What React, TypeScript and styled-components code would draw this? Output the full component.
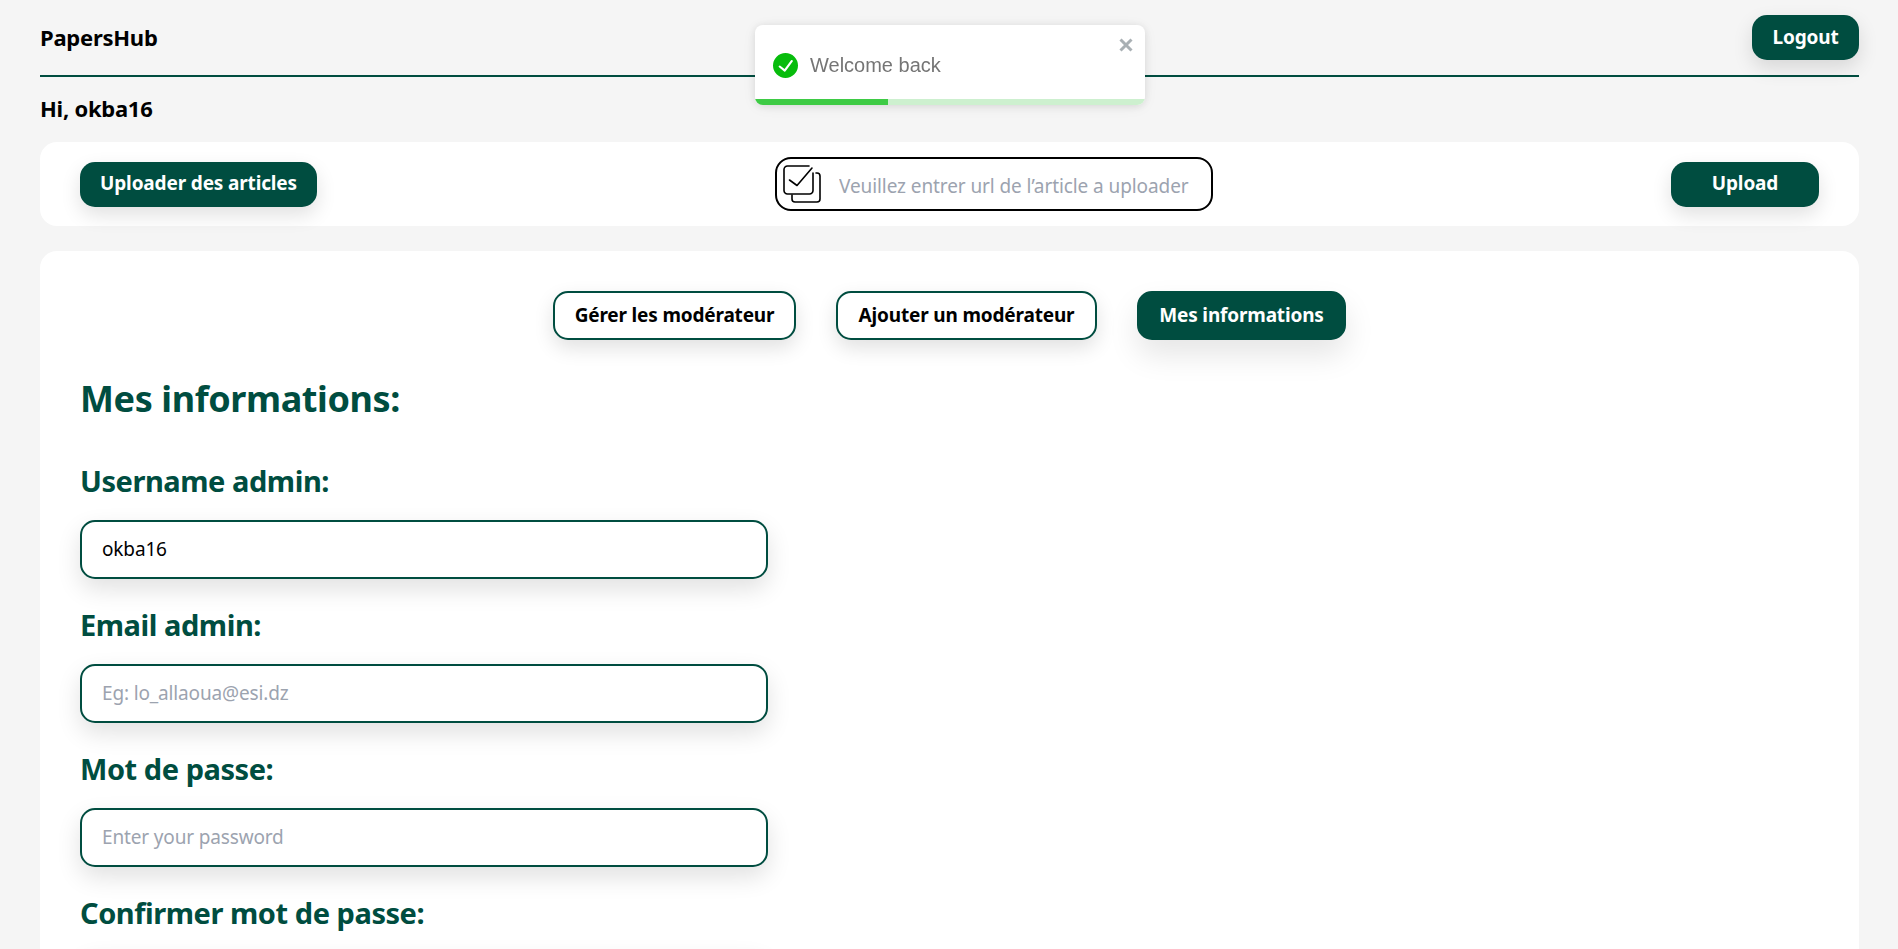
import React from "react";
import styled, { createGlobalStyle } from "styled-components";

const GREEN = "#004d40";
const FONT = `"Noto Sans", "Open Sans", "Liberation Sans", sans-serif`;

const Global = createGlobalStyle`
  html, body { margin: 0; padding: 0; background: #f5f5f5; overflow: hidden; height: 100%; }
  * { box-sizing: border-box; }
  body { font-family: ${FONT}; }
`;

const Page = styled.div`
  padding: 15px 39px 40px 40px;
  height: 949px;
  overflow: hidden;
`;
const Header = styled.header`
  display: flex;
  justify-content: space-between;
  align-items: center;
  padding-bottom: 15px;
  border-bottom: 2px solid ${GREEN};
`;
const Brand = styled.div`
  font-size: 22px;
  font-weight: 700;
  color: #000;
  letter-spacing: -0.25px;
  padding-bottom: 2px;
`;
const Greeting = styled.div`
  font-size: 22px;
  font-weight: 700;
  line-height: 30px;
  color: #000;
  margin: 16px 0 19px;
  letter-spacing: -0.25px;
`;
const Solid = styled.button<{ $w: number }>`
  width: ${(p) => p.$w}px;
  height: 45px;
  border: none;
  border-radius: 15px;
  background: ${GREEN};
  color: #fff;
  font-family: ${FONT};
  font-size: 19px;
  font-weight: 700;
  letter-spacing: -0.15px;
  padding: 0 0 2px;
  box-shadow: 0 8px 20px rgba(0, 0, 0, 0.12);
`;
const UploadBar = styled.section`
  height: 84px;
  background: #fff;
  border-radius: 17px;
  padding: 0 40px;
  display: flex;
  align-items: center;
  justify-content: space-between;
`;
const UrlBox = styled.label`
  width: 438px;
  height: 54px;
  border: 2px solid #000;
  border-radius: 16px;
  display: flex;
  align-items: center;
  gap: 18px;
  padding: 0 6px;
`;
const UrlInput = styled.input`
  flex: 1;
  min-width: 0;
  border: none;
  outline: none;
  padding: 4px 0 0;
  background: transparent;
  font-family: ${FONT};
  font-size: 19px;
  letter-spacing: -0.09px;
  &::placeholder { color: #9ca3af; opacity: 1; }
`;
const Card = styled.main`
  margin-top: 25px;
  background: #fff;
  border-radius: 17px;
  padding: 40px;
  min-height: 800px;
`;
const Tabs = styled.nav`
  display: flex;
  justify-content: center;
  gap: 40px;
`;
const Tab = styled.button<{ $active?: boolean; $w: number }>`
  width: ${(p) => p.$w}px;
  height: 49px;
  border-radius: 15px;
  border: 2px solid ${GREEN};
  padding: 0 0 2px;
  background: ${(p) => (p.$active ? GREEN : "#fff")};
  color: ${(p) => (p.$active ? "#fff" : "#000")};
  font-family: ${FONT};
  font-size: 19px;
  font-weight: 700;
  letter-spacing: -0.17px;
  box-shadow: ${(p) =>
    p.$active ? "0 15px 30px rgba(0,0,0,0.1)" : "0 8px 20px rgba(0,0,0,0.12)"};
`;
const Title = styled.h2`
  margin: 35px 0 38px;
  font-size: 36px;
  line-height: 48px;
  font-weight: 700;
  color: ${GREEN};
  letter-spacing: -0.4px;
`;
const Field = styled.div`
  margin-bottom: 26px;
`;
const Label = styled.label`
  display: block;
  height: 40px;
  margin-bottom: 19px;
  font-size: 29px;
  line-height: 40px;
  font-weight: 700;
  color: ${GREEN};
  letter-spacing: -0.45px;
`;
const TextInput = styled.input`
  display: block;
  width: 688px;
  height: 59px;
  padding: 0 20px 2px;
  border: 2px solid ${GREEN};
  border-radius: 15px;
  outline: none;
  background: #fff;
  color: #000;
  font-family: ${FONT};
  font-size: 19px;
  letter-spacing: -0.15px;
  box-shadow: 0 10px 25px rgba(0, 0, 0, 0.12);
  &::placeholder { color: #9ca3af; opacity: 1; }
`;
const Toast = styled.div`
  position: fixed;
  top: 25px;
  left: 755px;
  width: 390px;
  height: 80px;
  background: #fff;
  border-radius: 8px;
  overflow: hidden;
  box-shadow: 0 1px 10px rgba(0, 0, 0, 0.1), 0 2px 15px rgba(0, 0, 0, 0.05);
  display: flex;
  align-items: center;
  padding: 0 18px;
  gap: 12px;
  font-family: "Liberation Sans", Arial, sans-serif;
  font-size: 20px;
  color: #757575;
  z-index: 10;
`;
const ToastClose = styled.span`
  position: absolute;
  top: 13px;
  right: 12px;
  line-height: 0;
  color: #a9b0b4;
`;
const ToastTrack = styled.div`
  position: absolute;
  left: 0;
  right: 0;
  bottom: 0;
  height: 6px;
  background: #cdf0cf;
`;
const ToastFill = styled.div`
  height: 100%;
  background: #3ecb45;
`;

const StackCheckIcon = () => (
  <svg width="38" height="38" viewBox="0 0 38 38" fill="none" stroke="#000" strokeWidth="1.6" strokeLinecap="round" strokeLinejoin="round" style={{ flex: "none" }}>
    <path d="M26 1H4.5A3.5 3.5 0 0 0 1 4.5v21A3.5 3.5 0 0 0 4.5 29h22a3.5 3.5 0 0 0 3.5-3.5V8" />
    <path d="M33 8h1a3 3 0 0 1 3 3v23a3 3 0 0 1-3 3H12a3 3 0 0 1-3-3v-4" />
    <path d="M6.5 15l7.5 5.5L29 3" />
  </svg>
);
const CheckBadge = () => (
  <svg width="25" height="25" viewBox="0 0 24 24" style={{ flex: "none" }}>
    <path fill="#07bc0c" d="M12 0a12 12 0 1 0 12 12A12 12 0 0 0 12 0zm6.93 8.2l-6.85 9.29a1 1 0 0 1-1.43.19l-4.89-3.91a1 1 0 0 1 1.25-1.56l4.08 3.26 6.23-8.45a1 1 0 0 1 1.61 1.18z" />
  </svg>
);
const CloseIcon = () => (
  <svg width="14" height="14" viewBox="0 0 14 14" stroke="currentColor" strokeWidth="3">
    <path d="M1.5 1.5l11 11M12.5 1.5l-11 11" />
  </svg>
);

const fields = [
  { label: "Username admin:", value: "okba16", placeholder: "" },
  { label: "Email admin:", value: "", placeholder: "Eg: lo_allaoua@esi.dz" },
  { label: "Mot de passe:", value: "", placeholder: "Enter your password" },
  { label: "Confirmer mot de passe:", value: "", placeholder: "Confirm your password" },
];

export default function App() {
  return (
    <Page>
      <Global />
      <Toast>
        <CheckBadge />
        <span>Welcome back</span>
        <ToastClose><CloseIcon /></ToastClose>
        <ToastTrack><ToastFill style={{ width: "34%" }} /></ToastTrack>
      </Toast>
      <Header>
        <Brand>PapersHub</Brand>
        <Solid $w={107}>Logout</Solid>
      </Header>
      <Greeting>Hi, okba16</Greeting>
      <UploadBar>
        <Solid $w={237}>Uploader des articles</Solid>
        <UrlBox>
          <StackCheckIcon />
          <UrlInput placeholder="Veuillez entrer url de l’article a uploader" />
        </UrlBox>
        <Solid $w={148}>Upload</Solid>
      </UploadBar>
      <Card>
        <Tabs>
          <Tab $w={243}>Gérer les modérateur</Tab>
          <Tab $w={261}>Ajouter un modérateur</Tab>
          <Tab $w={209} $active>Mes informations</Tab>
        </Tabs>
        <Title>Mes informations:</Title>
        {fields.map((f) => (
          <Field key={f.label}>
            <Label>{f.label}</Label>
            <TextInput defaultValue={f.value} placeholder={f.placeholder} />
          </Field>
        ))}
      </Card>
    </Page>
  );
}
